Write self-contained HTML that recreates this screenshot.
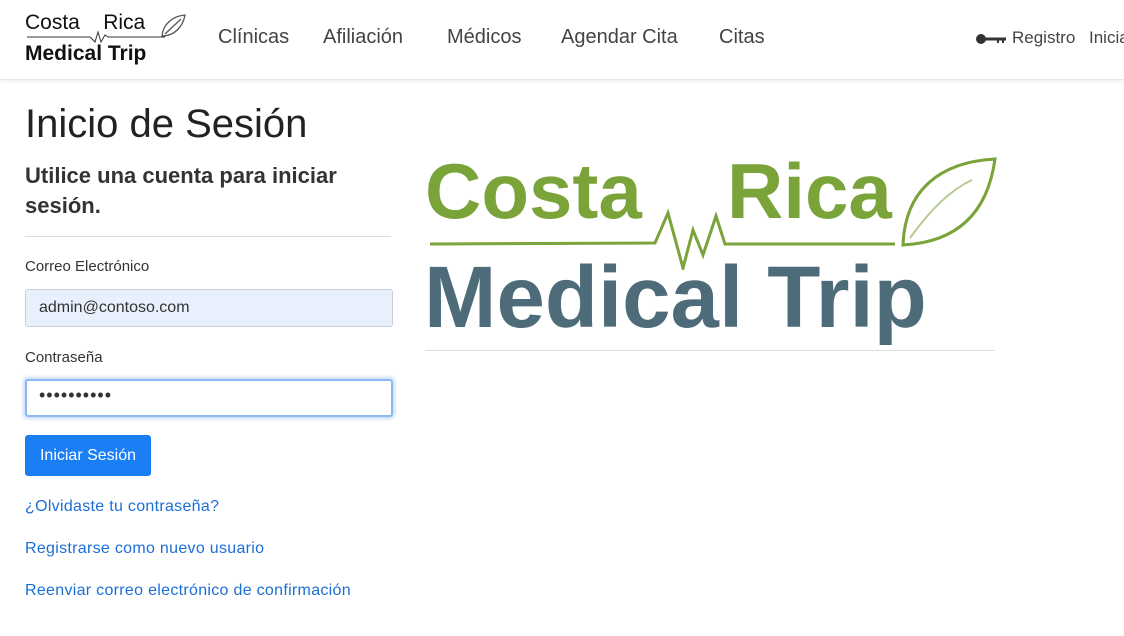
<!DOCTYPE html>
<html><head><meta charset="utf-8"><style>
*{margin:0;padding:0;box-sizing:border-box}
body{width:1124px;height:636px;overflow:hidden;background:#fff;font-family:"Liberation Sans",sans-serif;color:#222;position:relative}
.hdr{position:absolute;left:0;top:0;width:1124px;height:80px;border-bottom:1px solid #e6e6e6;box-shadow:0 2px 4px rgba(0,0,0,.06)}
.a{position:absolute}
.nav{font-size:20px;color:#444;top:26px}
label{position:absolute;font-size:15px;color:#333;left:25px}
.inp{position:absolute;left:25px;width:368px;height:38px;border:1px solid #ccd;border-radius:3px;font-size:16px;padding:9px 13px;color:#333}
.lnk{position:absolute;left:25px;font-size:16px;letter-spacing:.3px;color:#1a6fd6}
</style></head><body>
<div class="hdr">
 <div class="a" style="left:25px;top:12px;font-size:21px;line-height:22px;color:#111;font-weight:bold;font-weight:500">Costa&nbsp;&nbsp;&nbsp;&nbsp;Rica</div>
 <svg class="a" style="left:25px;top:12px" width="165" height="60"><polyline points="2,25 65,25 70,30 73,20 76,30 80,23 83,25 140,25" fill="none" stroke="#333" stroke-width="1"/><path d="M137,24 C138,12 148,4 160,3 C158,14 150,24 137,24 Z M140,22 L156,7" fill="none" stroke="#555" stroke-width="1.3"/></svg>
 <div class="a" style="left:25px;top:42px;font-size:21px;font-weight:bold;color:#111">Medical Trip</div>
 <div class="a nav" style="left:218px">Clínicas</div>
 <div class="a nav" style="left:323px">Afiliación</div>
 <div class="a nav" style="left:447px">Médicos</div>
 <div class="a nav" style="left:561px">Agendar Cita</div>
 <div class="a nav" style="left:719px">Citas</div>
 <svg class="a" style="left:975px;top:33px" width="32" height="12"><circle cx="6" cy="6" r="5" fill="#333"/><rect x="9" y="4.5" width="22" height="3" fill="#333"/><rect x="22" y="6" width="2" height="4" fill="#333"/><rect x="27" y="6" width="2" height="4" fill="#333"/></svg>
 <div class="a" style="left:1012px;top:28px;font-size:17px;color:#444">Registro</div>
 <div class="a" style="left:1089px;top:28px;font-size:17px;color:#444">Iniciar</div>
</div>
<div class="a" style="left:25px;top:102px;font-size:40px;color:#222">Inicio de Sesión</div>
<div class="a" style="left:25px;top:161px;font-size:22px;line-height:30px;color:#333;font-weight:bold;width:370px">Utilice una cuenta para iniciar sesión.</div>
<div class="a" style="left:25px;top:236px;width:366px;height:1px;background:#ddd"></div>
<label style="top:258px">Correo Electrónico</label>
<div class="inp" style="top:289px;background:#e8f0fe">admin@contoso.com</div>
<label style="top:349px">Contraseña</label>
<div class="inp" style="top:379px;border:2px solid #8bb8f0;box-shadow:0 0 3px 2px rgba(120,170,240,.4);font-size:18px;padding:4px 12px;letter-spacing:1px">••••••••••</div>
<div class="a" style="left:25px;top:435px;width:126px;height:41px;background:#1a7ef5;border-radius:3px;color:#fff;font-size:16px;text-align:center;line-height:41px">Iniciar Sesión</div>
<div class="lnk" style="top:498px">¿Olvidaste tu contraseña?</div>
<div class="lnk" style="top:540px">Registrarse como nuevo usuario</div>
<div class="lnk" style="top:582px">Reenviar correo electrónico de confirmación</div>
<div class="a" style="left:425px;top:146px;font-size:78px;font-weight:bold;color:#7aa33a;line-height:90px">Costa</div>
<div class="a" style="left:727px;top:146px;font-size:78px;font-weight:bold;color:#7aa33a;line-height:90px">Rica</div>
<svg class="a" style="left:420px;top:150px" width="580" height="120"><polyline points="10,94 235,93 248,63 263,118 273,80 283,105 296,66 305,94 475,94" fill="none" stroke="#7aa33a" stroke-width="3"/><path d="M483,95 C485,40 520,12 575,9 C568,60 540,92 483,95 Z" fill="none" stroke="#7aa33a" stroke-width="3"/><path d="M490,88 C510,60 530,40 552,30" fill="none" stroke="#b5cc90" stroke-width="2"/></svg>
<div class="a" style="left:424px;top:250px;font-size:87px;font-weight:bold;color:#4e6b7a;line-height:95px">Medical Trip</div>
<div class="a" style="left:425px;top:350px;width:570px;height:1px;background:#ddd"></div>
</body></html>
